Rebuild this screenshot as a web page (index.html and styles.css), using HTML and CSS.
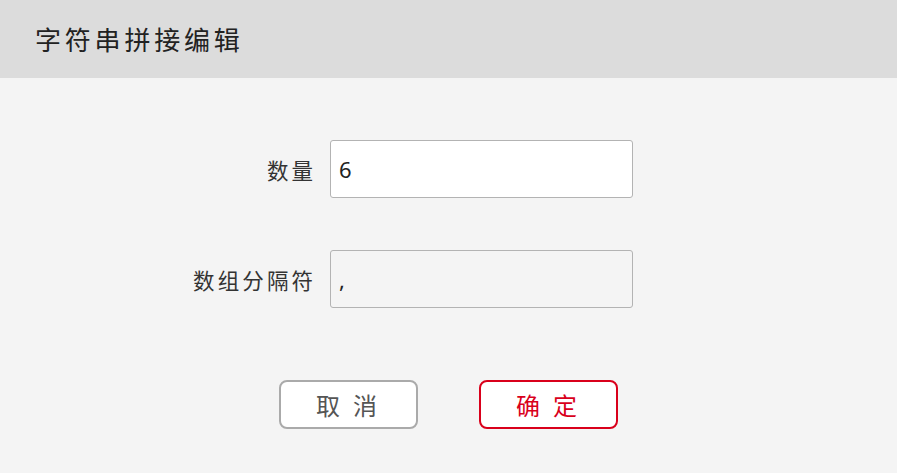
FILE: index.html
```html
<!DOCTYPE html>
<html lang="zh-CN">
<head>
  <meta charset="UTF-8">
  <meta name="viewport" content="width=device-width, initial-scale=1.0">
  <title>字符串拼接编辑</title>
  <link rel="stylesheet" href="styles.css">
</head>
<body>
  <div class="header">字符串拼接编辑</div>

  <div class="form">
    <label class="label" for="count">数量</label>
    <input id="count" class="field" type="text" value="6">

    <label class="label" for="sep">数组分隔符</label>
    <input id="sep" class="field field-muted" type="text" value=",">
  </div>

  <div class="actions">
    <button class="btn btn-cancel">取 消</button>
    <button class="btn btn-ok">确 定</button>
  </div>
</body>
</html>
```

FILE: styles.css
```css
body {
  margin: 0;
  background: #f4f4f4;
  font-family: "Noto Sans CJK SC", "Noto Sans", sans-serif;
  color: #333;
}
.header {
  height: 78px;
  line-height: 78px;
  background: #dcdcdc;
  padding-left: 35px;
  font-size: 26px;
  letter-spacing: 3.8px;
  color: #222;
}
.form {
  display: grid;
  grid-template-columns: 305px 303px;
  column-gap: 17px;
  row-gap: 52px;
  align-items: center;
  padding: 62px 0 0 8px;
}
.label {
  text-align: right;
  font-size: 21.5px;
  letter-spacing: 3.1px;
  margin-right: -3.1px;
  color: #333;
}
.field {
  box-sizing: border-box;
  height: 58px;
  width: 303px;
  padding: 0 8px;
  border: 1px solid #b3b3b3;
  border-radius: 3px;
  background: #fff;
  font-family: "Noto Sans", sans-serif;
  font-size: 22px;
  color: #222;
  outline: none;
}
.field-muted { background: #f4f4f4; }
.actions {
  display: flex;
  justify-content: center;
  gap: 61px;
  margin-top: 72px;
}
.btn {
  box-sizing: border-box;
  width: 139px;
  height: 49px;
  border-radius: 8px;
  background: #fff;
  font-family: "Noto Sans CJK SC", sans-serif;
  font-size: 24px;
  letter-spacing: 3.8px;
  padding: 0;
  cursor: pointer;
}
.btn-cancel {
  border: 2px solid #aaa;
  color: #555;
}
.btn-ok {
  border: 2px solid #d9001b;
  color: #d9001b;
}
```
